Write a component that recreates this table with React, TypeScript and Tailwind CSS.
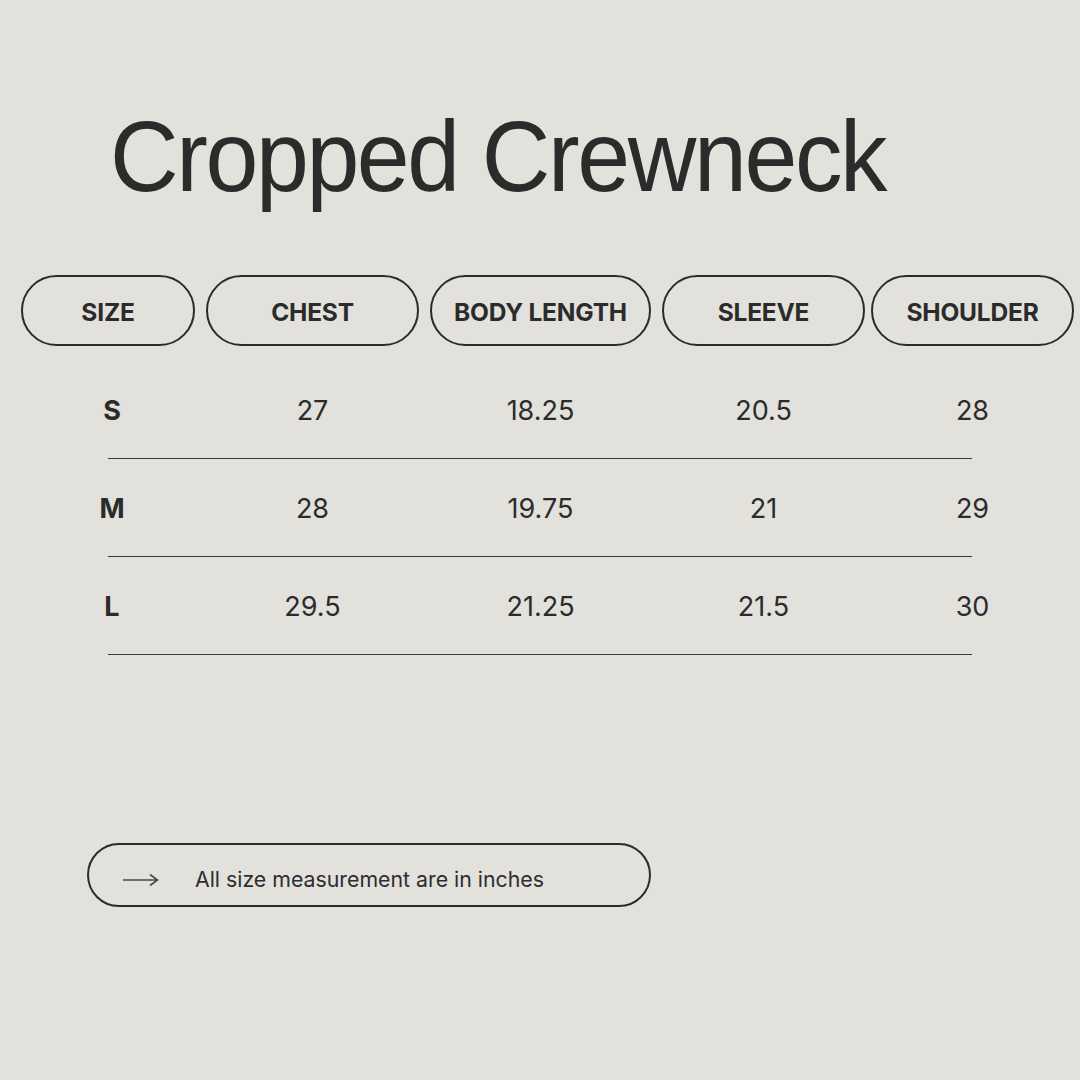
const COLS = [
  { label: 'SIZE', w: 'w-[174px]' },
  { label: 'CHEST', w: 'w-[213px]' },
  { label: 'BODY LENGTH', w: 'w-[221px]' },
  { label: 'SLEEVE', w: 'w-[203px]' },
  { label: 'SHOULDER', w: 'w-[203px]' },
];

const ROWS = [
  ['S', '27', '18.25', '20.5', '28'],
  ['M', '28', '19.75', '21', '29'],
  ['L', '29.5', '21.25', '21.5', '30'],
];

const gaps = ['', 'ml-[11px]', 'ml-[11px]', 'ml-[11px]', 'ml-[6px]'];

export default function App() {
  return (
    <div className="w-[1080px] h-[1080px] bg-[#e2e1dc] text-[#2b2b2b] overflow-hidden font-['Inter',sans-serif]">
      {/* Title */}
      <h1 className="ml-[110px] mt-[106px] origin-left scale-x-[0.95] text-[100px] leading-none tracking-[-2.5px] font-['Liberation_Sans',Arial,sans-serif] text-[#2b2b2b]">
        Cropped Crewneck
      </h1>

      {/* Table */}
      <div className="mt-[69px] pl-[21px]">
        <div className="flex">
          {COLS.map((c, i) => (
            <div
              key={c.label}
              className={`${c.w} ${gaps[i]} h-[71px] pt-[3px] rounded-full border-2 border-[#2b2b2b] flex items-center justify-center text-[24.5px] font-bold tracking-[-0.2px]`}
            >
              {c.label}
            </div>
          ))}
        </div>

        <div className="mt-[15px]">
          {ROWS.map((row) => (
            <div key={row[0]}>
              <div className="flex h-[97px] pt-[4px] items-center">
                {row.map((v, i) => (
                  <div
                    key={i}
                    className={`${COLS[i].w} ${gaps[i]} text-center text-[27px] ${i === 0 ? 'font-bold pl-[8px]' : 'font-normal'}`}
                  >
                    {v}
                  </div>
                ))}
              </div>
              <div className="ml-[87px] w-[864px] h-px bg-[#3a3a3a]" />
            </div>
          ))}
        </div>
      </div>

      {/* Note */}
      <div className="ml-[87px] mt-[188px] w-[564px] h-[64px] pt-[10px] rounded-full border-2 border-[#2b2b2b] flex items-center">
        <svg width="38" height="14" viewBox="0 0 38 14" className="ml-[33px]">
          <path d="M1 7 H35 M28 1.5 L35.5 7 L28 12.5" fill="none" stroke="#4a4a4a" strokeWidth="1.6" />
        </svg>
        <span className="ml-[35px] text-[21.3px] text-[#2e2e2e]">All size measurement are in inches</span>
      </div>
    </div>
  );
}
